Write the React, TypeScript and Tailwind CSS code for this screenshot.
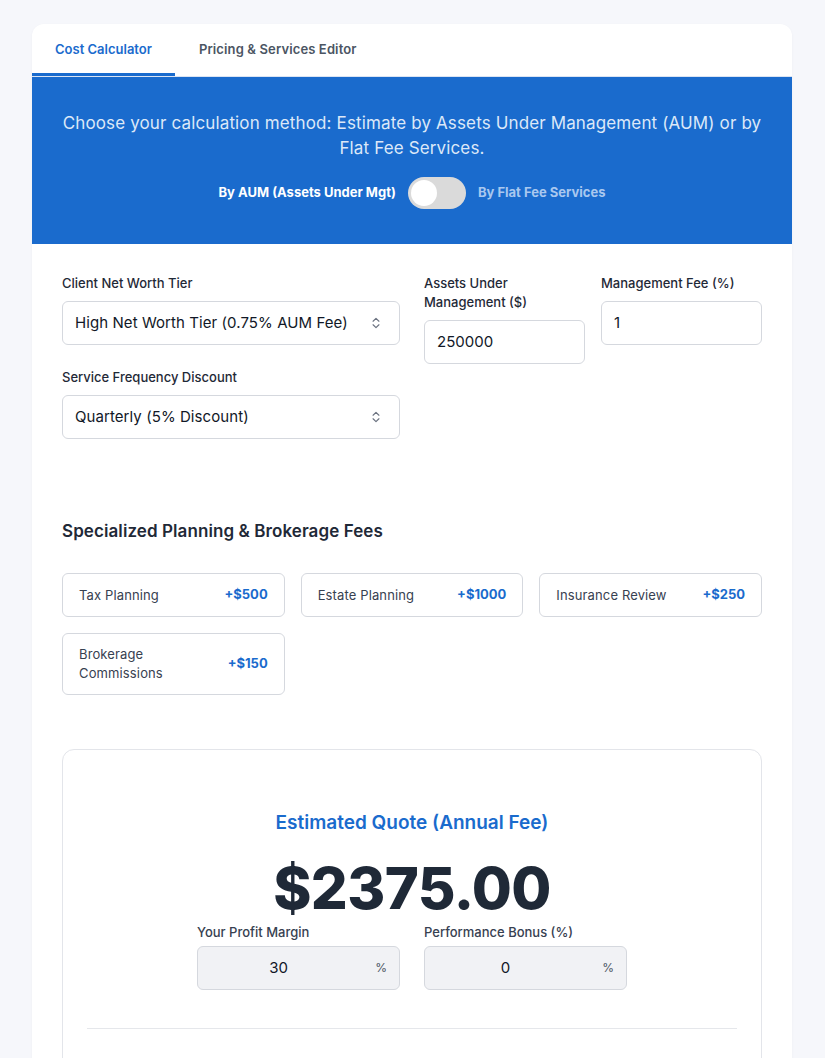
import { useState } from 'react'
import { ChevronsUpDown } from 'lucide-react'

const services = [
  { name: 'Tax Planning', price: 500 },
  { name: 'Estate Planning', price: 1000 },
  { name: 'Insurance Review', price: 250 },
  { name: 'Brokerage Commissions', price: 150 },
]

function Field({ label, children }: { label: string; children: React.ReactNode }) {
  return (
    <div className="flex flex-col">
      <label className="mb-2 text-[13px] font-medium leading-[19px] text-[#1f2937]">{label}</label>
      {children}
    </div>
  )
}

function SelectBox({ value }: { value: string }) {
  return (
    <div className="flex h-[44px] items-center justify-between rounded-md border border-[#d5d8de] bg-white pl-3 pr-4 text-[15px] tracking-[0.005em] text-[#111827]">
      <span>{value}</span>
      <ChevronsUpDown className="h-3.5 w-3.5 text-[#6b7280]" strokeWidth={2} />
    </div>
  )
}

function TextBox({ value }: { value: string }) {
  return (
    <div className="flex h-[44px] items-center rounded-md border border-[#d5d8de] bg-white px-3 text-[15px] text-[#111827]">
      {value}
    </div>
  )
}

export default function App() {
  const [tab, setTab] = useState<'calc' | 'editor'>('calc')
  const [flat, setFlat] = useState(false)

  return (
    <div className="min-h-screen bg-[#f6f7fb] pl-8 pr-[33px] pt-6" style={{ fontFamily: 'Inter, "Noto Sans", sans-serif' }}>
      <div className="overflow-hidden rounded-xl bg-white shadow-[0_1px_3px_rgba(0,0,0,0.04)]">
        {/* Tabs */}
        <div className="flex h-[53px] border-b border-[#dbe4f3]">
          <button
            onClick={() => setTab('calc')}
            className={`border-b-[3px] px-[23px] pt-[2px] text-[13px] font-semibold ${
              tab === 'calc' ? 'border-[#1a6bcd] text-[#1a6bcd]' : 'border-transparent text-[#4b5563]'
            }`}
          >
            Cost Calculator
          </button>
          <button
            onClick={() => setTab('editor')}
            className={`border-b-[3px] px-[24px] pt-[2px] text-[13px] font-semibold tracking-[0.01em] ${
              tab === 'editor' ? 'border-[#1a6bcd] text-[#1a6bcd]' : 'border-transparent text-[#4b5563]'
            }`}
          >
            Pricing &amp; Services Editor
          </button>
        </div>

        {/* Method banner */}
        <div className="bg-[#1a6bcd] px-[26px] pb-[35px] pt-[34px] text-center">
          <p className="text-[17px] leading-[25px] tracking-[0.008em] text-[#dce8f8]">
            Choose your calculation method: Estimate by Assets Under Management (AUM) or by Flat Fee Services.
          </p>
          <div className="mt-4 flex items-center justify-center gap-3">
            <span className={`text-[13px] font-bold ${flat ? 'text-[#a9c8ef]' : 'text-white'}`}>By AUM (Assets Under Mgt)</span>
            <button
              onClick={() => setFlat(!flat)}
              className={`flex h-[32px] w-[58px] items-center rounded-full bg-[#dadada] p-[3px] ${flat ? 'justify-end' : 'justify-start'}`}
            >
              <span className="h-[26px] w-[26px] rounded-full bg-white" />
            </button>
            <span className={`text-[13px] font-bold ${flat ? 'text-white' : 'text-[#a9c8ef]'}`}>By Flat Fee Services</span>
          </div>
        </div>

        {/* Body */}
        <div className="px-[30px] pb-10 pt-[30px]">
          <div className="grid grid-cols-2 gap-x-6">
            <div className="flex flex-col gap-[23px]">
              <Field label="Client Net Worth Tier">
                <SelectBox value="High Net Worth Tier (0.75% AUM Fee)" />
              </Field>
              <Field label="Service Frequency Discount">
                <SelectBox value="Quarterly (5% Discount)" />
              </Field>
            </div>
            <div className="grid grid-cols-2 items-start gap-x-4">
              <Field label="Assets Under Management ($)">
                <TextBox value="250000" />
              </Field>
              <Field label="Management Fee (%)">
                <TextBox value="1" />
              </Field>
            </div>
          </div>

          <h2 className="mt-[80px] text-[17px] font-semibold leading-[24px] tracking-[0.005em] text-[#1f2937]">
            Specialized Planning &amp; Brokerage Fees
          </h2>

          <div className="mt-[30px] grid grid-cols-3 gap-4">
            {services.map((s) => (
              <div
                key={s.name}
                className="flex min-h-[44px] items-center justify-between gap-4 rounded-md border border-[#d5d8de] bg-white px-4 py-[11px]"
              >
                <span className="text-[13px] leading-[19px] tracking-[0.01em] text-[#374151]">{s.name}</span>
                <span className="text-[13px] font-bold text-[#1a6bcd]">+${s.price}</span>
              </div>
            ))}
          </div>

          {/* Quote */}
          <div className="mt-[54px] rounded-xl border border-[#e3e5ea] px-6 pb-10 pt-[60px]">
            <h3 className="text-center text-[19px] font-semibold leading-[26px] text-[#1a6bcd]">
              Estimated Quote (Annual Fee)
            </h3>
            <div className="mt-[23px] text-center text-[58px] font-extrabold leading-[58px] tracking-[-0.01em] text-[#1f2937]">
              $2375.00
            </div>
            <div className="mt-[6px] flex justify-center gap-6">
              {[
                { label: 'Your Profit Margin', value: '30' },
                { label: 'Performance Bonus (%)', value: '0' },
              ].map((f) => (
                <div key={f.label} className="flex w-[203px] flex-col">
                  <label className="mb-1 text-[13px] font-medium leading-[19px] text-[#374151]">{f.label}</label>
                  <div className="relative flex h-[44px] items-center rounded-md border border-[#d5d8de] bg-[#f1f2f5]">
                    <span className="flex-1 pr-10 text-center text-[15px] text-[#111827]">{f.value}</span>
                    <span className="absolute right-3 text-[12px] text-[#4b5563]">%</span>
                  </div>
                </div>
              ))}
            </div>
            <div className="mt-[38px] border-t border-[#e5e7eb]" />
            <div className="h-20" />
          </div>
        </div>
      </div>
    </div>
  )
}
